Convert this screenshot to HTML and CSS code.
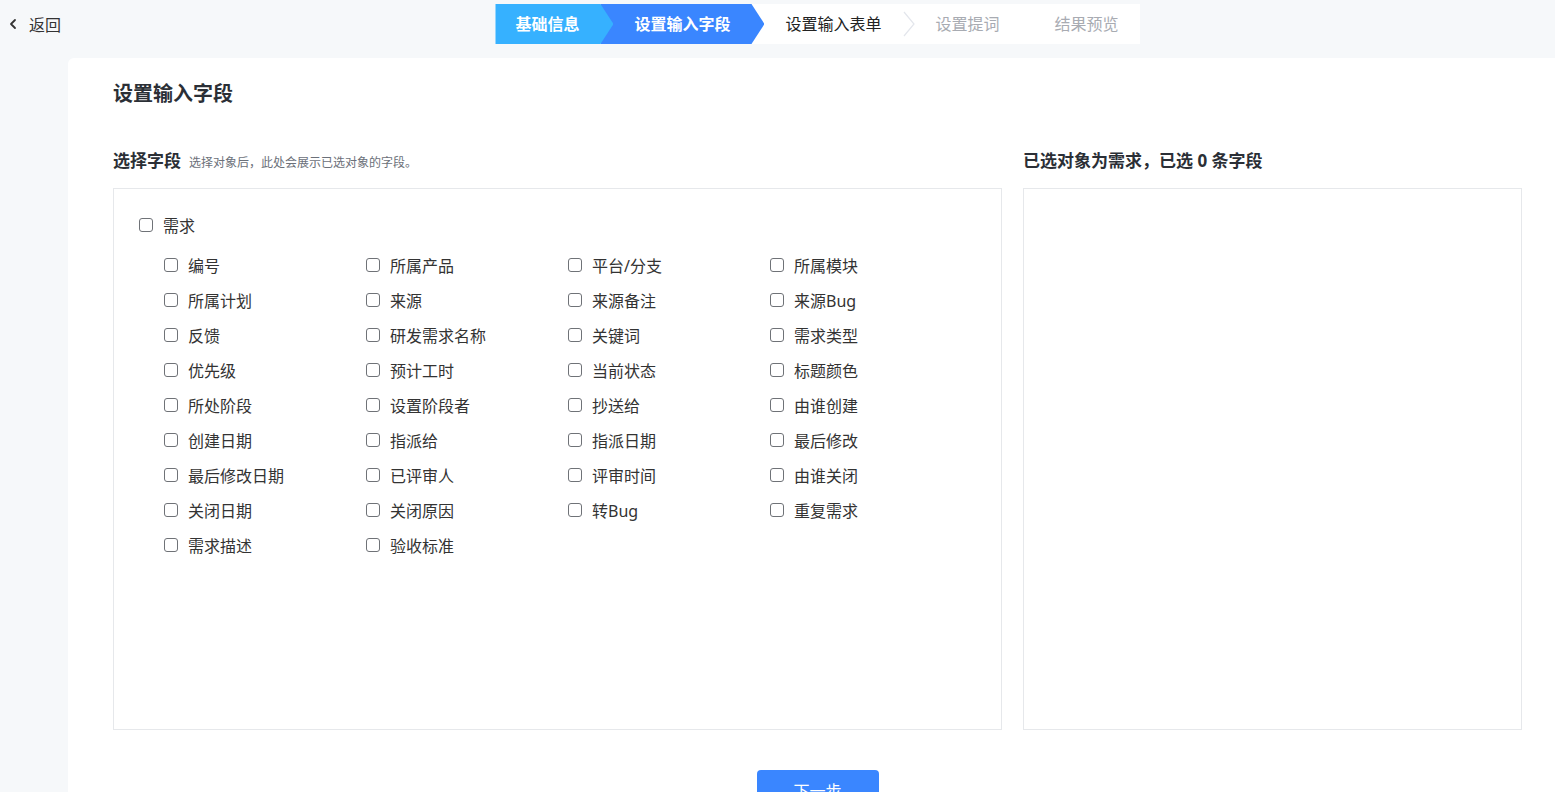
FILE: index.html
```html
<!DOCTYPE html>
<html lang="zh-CN">
  <head>
    <meta charset="UTF-8" />
    <meta name="viewport" content="width=device-width, initial-scale=1.0" />
    <title>设置输入字段</title>
    <link rel="stylesheet" href="styles.css">
  </head>
  <body>
    <div class="header">
      <a class="back" href="#">
        <svg width="8" height="12" viewBox="0 0 8 12"><path d="M6 2 L2 6 L6 10" fill="none" stroke="#333" stroke-width="1.8" stroke-linecap="round" stroke-linejoin="round"/></svg>
        <span>返回</span>
      </a>
      <div class="steps-wrap">
        <div class="steps">
          <div class="step step-done">基础信息</div>
          <div class="step step-active">设置输入字段</div>
          <div class="step step-next">设置输入表单</div>
          <svg class="chevron" width="12" height="26" viewBox="0 0 12 26"><path d="M1 1 L11 13 L1 25" fill="none" stroke="#e3e6ec" stroke-width="1.2"/></svg>
          <div class="step step-todo">设置提词</div>
          <div class="step step-todo step-last">结果预览</div>
        </div>
      </div>
    </div>

    <div class="card">
      <h1 class="page-title">设置输入字段</h1>

      <div class="panels">
        <div class="panel panel-left">
          <div class="panel-head">
            <span class="panel-title">选择字段</span>
            <span class="panel-hint">选择对象后，此处会展示已选对象的字段。</span>
          </div>
          <div class="box">
            <label class="check check-root"><input type="checkbox"><span>需求</span></label>
            <div class="field-grid">
              <label class="check"><input type="checkbox"><span>编号</span></label>
              <label class="check"><input type="checkbox"><span>所属产品</span></label>
              <label class="check"><input type="checkbox"><span>平台/分支</span></label>
              <label class="check"><input type="checkbox"><span>所属模块</span></label>
              <label class="check"><input type="checkbox"><span>所属计划</span></label>
              <label class="check"><input type="checkbox"><span>来源</span></label>
              <label class="check"><input type="checkbox"><span>来源备注</span></label>
              <label class="check"><input type="checkbox"><span>来源Bug</span></label>
              <label class="check"><input type="checkbox"><span>反馈</span></label>
              <label class="check"><input type="checkbox"><span>研发需求名称</span></label>
              <label class="check"><input type="checkbox"><span>关键词</span></label>
              <label class="check"><input type="checkbox"><span>需求类型</span></label>
              <label class="check"><input type="checkbox"><span>优先级</span></label>
              <label class="check"><input type="checkbox"><span>预计工时</span></label>
              <label class="check"><input type="checkbox"><span>当前状态</span></label>
              <label class="check"><input type="checkbox"><span>标题颜色</span></label>
              <label class="check"><input type="checkbox"><span>所处阶段</span></label>
              <label class="check"><input type="checkbox"><span>设置阶段者</span></label>
              <label class="check"><input type="checkbox"><span>抄送给</span></label>
              <label class="check"><input type="checkbox"><span>由谁创建</span></label>
              <label class="check"><input type="checkbox"><span>创建日期</span></label>
              <label class="check"><input type="checkbox"><span>指派给</span></label>
              <label class="check"><input type="checkbox"><span>指派日期</span></label>
              <label class="check"><input type="checkbox"><span>最后修改</span></label>
              <label class="check"><input type="checkbox"><span>最后修改日期</span></label>
              <label class="check"><input type="checkbox"><span>已评审人</span></label>
              <label class="check"><input type="checkbox"><span>评审时间</span></label>
              <label class="check"><input type="checkbox"><span>由谁关闭</span></label>
              <label class="check"><input type="checkbox"><span>关闭日期</span></label>
              <label class="check"><input type="checkbox"><span>关闭原因</span></label>
              <label class="check"><input type="checkbox"><span>转Bug</span></label>
              <label class="check"><input type="checkbox"><span>重复需求</span></label>
              <label class="check"><input type="checkbox"><span>需求描述</span></label>
              <label class="check"><input type="checkbox"><span>验收标准</span></label>
            </div>
          </div>
        </div>

        <div class="panel panel-right">
          <div class="panel-head">
            <span class="panel-title">已选对象为需求，已选 0 条字段</span>
          </div>
          <div class="box"></div>
        </div>
      </div>

      <div class="actions">
        <button class="btn-primary">下一步</button>
      </div>
    </div>
  </body>
</html>
```

FILE: styles.css
```css
:root {
  --blue: #3a86ff;
  --blue-light: #36b1ff;
  --text: #2b2f36;
  --muted: #8a8f99;
  --border: #e6e8eb;
  --page: #f6f8fa;
}

* {
  margin: 0;
  padding: 0;
  box-sizing: border-box;
}

body {
  background: var(--page);
  font-family: "Noto Sans", "Noto Sans CJK SC", sans-serif;
  color: var(--text);
  overflow: hidden;
}

/* Header */
.header {
  display: grid;
  grid-template-columns: 68px 1fr;
  height: 58px;
}

.back {
  display: flex;
  align-items: center;
  gap: 12px;
  height: 48px;
  padding-left: 9px;
  color: #333;
  text-decoration: none;
  font-size: 16px;
  white-space: nowrap;
}

.steps-wrap {
  display: flex;
  justify-content: center;
  padding: 4px 33px 0 45px;
}

.steps {
  display: flex;
  align-items: center;
  height: 40px;
  background: #fff;
}

.step {
  height: 40px;
  line-height: 40px;
  font-size: 16px;
  white-space: nowrap;
}

.step-done {
  position: relative;
  z-index: 2;
  width: 118px;
  padding-left: 20px;
  background: var(--blue-light);
  color: #fff;
  font-weight: 700;
  clip-path: polygon(0 0, 105px 0, 118px 50%, 105px 100%, 0 100%);
}

.step-active {
  width: 164px;
  margin-left: -13px;
  padding-left: 34px;
  background: var(--blue);
  color: #fff;
  font-weight: 700;
  clip-path: polygon(0 0, 151px 0, 164px 50%, 151px 100%, 0 100%);
}

.step-next {
  padding-left: 21px;
  color: #222;
}

.chevron {
  margin: 0 20px 0 22px;
}

.step-todo {
  color: #a8abb2;
}

.step-last {
  padding-left: 55px;
  padding-right: 21px;
}

/* Card */
.card {
  margin-left: 68px;
  min-height: 760px;
  padding: 20px 33px 0 45px;
  background: #fff;
  border-top-left-radius: 6px;
}

.page-title {
  font-size: 20px;
  font-weight: 700;
  line-height: 32px;
  color: var(--text);
}

.panels {
  display: flex;
  gap: 21px;
  margin-top: 39px;
}

.panel-left {
  width: 889px;
}

.panel-right {
  flex: 1;
}

.panel-head {
  display: flex;
  align-items: baseline;
  gap: 8px;
  height: 39px;
}

.panel-title {
  font-size: 17px;
  font-weight: 700;
  line-height: 24px;
}

.panel-hint {
  font-size: 12px;
  color: #6b7079;
}

.box {
  height: 542px;
  border: 1px solid var(--border);
}

.panel-left .box {
  padding: 24px 0 0 25px;
}

.check {
  display: flex;
  align-items: center;
  gap: 10px;
  height: 24px;
  font-size: 16px;
  color: #333;
  cursor: pointer;
}

.check input {
  appearance: none;
  width: 14px;
  height: 14px;
  border: 1.5px solid #6f7277;
  border-radius: 3px;
  background: #fff;
  flex: none;
}

.field-grid {
  display: grid;
  grid-template-columns: repeat(4, 202px);
  row-gap: 11px;
  margin-top: 16px;
  padding-left: 25px;
}

/* Actions */
.actions {
  display: flex;
  justify-content: center;
  margin-top: 40px;
}

.btn-primary {
  width: 122px;
  height: 40px;
  border: none;
  border-radius: 4px;
  background: var(--blue);
  color: #fff;
  font-family: inherit;
  font-size: 16px;
  cursor: pointer;
}
```
